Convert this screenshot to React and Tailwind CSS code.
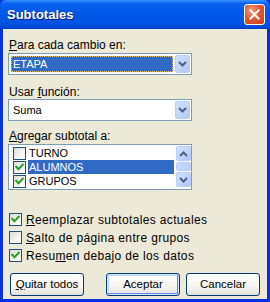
import React from "react";

function Check({ checked }) {
  return (
    <span className="w-[13px] h-[13px] border border-[#1C5180] bg-[linear-gradient(135deg,#DCDCD7_0%,#F4F4F1_60%,#FFFFFF_100%)] flex items-center justify-center shrink-0">
      {checked && (
        <svg width="9" height="9" viewBox="0 0 9 9">
          <path d="M1.2 3.8 L3.5 6.2 L7.8 1.6" stroke="#21A121" strokeWidth="2" fill="none" strokeLinecap="square" />
        </svg>
      )}
    </span>
  );
}

function Chevron({ up }) {
  return (
    <svg width="9" height="6" viewBox="0 0 9 6">
      <path d={up ? "M1 5 L4.5 1.5 L8 5" : "M1 1 L4.5 4.5 L8 1"} stroke="#4D6185" strokeWidth="2" fill="none" />
    </svg>
  );
}

function ArrowBtn({ up, className = "" }) {
  return (
    <div className={"w-[15px] rounded-[2px] border border-[#B9CEF8] bg-[linear-gradient(135deg,#D3E0FD_0%,#C2D5FC_50%,#AFC6F7_100%)] flex items-center justify-center " + className}>
      <Chevron up={up} />
    </div>
  );
}

function Combo({ value, selected }) {
  return (
    <div className="h-[22px] w-[184px] border border-[#7F9DB9] bg-white flex p-[1px] text-[11px]">
      <div className="flex-1 flex items-center pl-[1px] pr-[2px]">
        {selected ? (
          <div className="h-[16px] w-full bg-[#316AC5] text-white border border-dotted border-[#E9C46A] flex items-center pl-[1px] leading-none">
            {value}
          </div>
        ) : (
          <div className="pl-[2px] leading-none">{value}</div>
        )}
      </div>
      <ArrowBtn className="h-[18px]" />
    </div>
  );
}

function U({ children }) {
  return <span className="underline underline-offset-[1px]">{children}</span>;
}

const btn =
  "w-[74px] h-[23px] rounded-[3px] border border-[#003C74] bg-[linear-gradient(to_bottom,#FFFFFF_0%,#F5F4EF_60%,#E3E2DA_100%)] leading-none text-[11.5px]";

export default function App() {
  return (
    <div className="w-[270px] h-[302px] flex flex-col bg-[#0831D9] font-['Liberation_Sans',Arial,sans-serif] text-[12px] text-black select-none">
      <div className="h-[29px] shrink-0 rounded-t-[6px] bg-[linear-gradient(to_bottom,#3D95FF_0%,#0A62F0_12%,#0058E8_45%,#0054E3_80%,#0048D8_94%,#003DC4_100%)] flex items-center justify-between pl-[7px] pr-[5px]">
        <span className="text-white font-bold text-[13px] [text-shadow:1px_1px_#0A1883] mt-[1px]">Subtotales</span>
        <div className="w-[21px] h-[21px] rounded-[3px] border border-white bg-[radial-gradient(circle_at_35%_30%,#F39B7F_0%,#E45A33_45%,#C63C14_100%)] flex items-center justify-center">
          <svg width="11" height="11" viewBox="0 0 11 11">
            <path d="M1.5 1.5 L9.5 9.5 M9.5 1.5 L1.5 9.5" stroke="white" strokeWidth="2" strokeLinecap="square" />
          </svg>
        </div>
      </div>
      <div className="flex-1 mx-[3px] mb-[3px] bg-[#ECE9D8] flex flex-col px-[5px]">
        <div className="mt-[10px] h-[13px] leading-[13px] ml-[1px]"><U>P</U>ara cada cambio en:</div>
        <div className="mt-[1px]"><Combo value="ETAPA" selected /></div>
        <div className="mt-[11px] h-[13px] leading-[13px] ml-[1px]">Usar <U>f</U>unción:</div>
        <div className="mt-[0px]"><Combo value="Suma" /></div>
        <div className="mt-[9px] h-[13px] leading-[13px] ml-[1px]"><U>A</U>gregar subtotal a:</div>
        <div className="mt-[1px] w-[184px] h-[46px] border border-[#7F9DB9] bg-white flex text-[11px]">
          <div className="flex-1 flex flex-col pt-[1px] pl-[4px]">
            {[
              ["TURNO", false, false],
              ["ALUMNOS", true, true],
              ["GRUPOS", true, false],
            ].map(([t, c, s]) => (
              <div key={t} className="h-[14px] flex items-center">
                <Check checked={c} />
                <div className={"ml-[2px] flex-1 h-[14px] flex items-center pl-[1px] " + (s ? "bg-[#316AC5] text-white" : "")}>{t}</div>
              </div>
            ))}
          </div>
          <div className="w-[17px] bg-[#FCFCFB] flex flex-col items-center py-[1px] pl-[1px]">
            <ArrowBtn up className="h-[15px]" />
            <div className="w-[15px] h-[9px] mt-[1px] rounded-[2px] border border-[#B9CEF8] bg-[linear-gradient(to_right,#CADAFC,#BCCFF8)]" />
            <ArrowBtn className="h-[15px] mt-[1px]" />
          </div>
        </div>
        <div className="mt-[21px] flex flex-col gap-[1px] ml-[1px] tracking-[0.35px]">
          <div className="h-[17px] flex items-center gap-[4px]"><Check checked /><span><U>R</U>eemplazar subtotales actuales</span></div>
          <div className="h-[17px] flex items-center gap-[4px]"><Check /><span><U>S</U>alto de página entre grupos</span></div>
          <div className="h-[17px] flex items-center gap-[4px]"><Check checked /><span>Resu<U>m</U>en debajo de los datos</span></div>
        </div>
        <div className="mt-[9px] flex">
          <button className={"ml-[2px] " + btn}><U>Q</U>uitar todos</button>
          <button className={"ml-[22px] " + btn + " shadow-[inset_0_0_0_1px_#CEE7FF,inset_-1px_-1px_0_1px_#6982EE,inset_1px_1px_0_1px_#BCD4F6]"}>Aceptar</button>
          <button className={"ml-[6px] " + btn}>Cancelar</button>
        </div>
      </div>
    </div>
  );
}
